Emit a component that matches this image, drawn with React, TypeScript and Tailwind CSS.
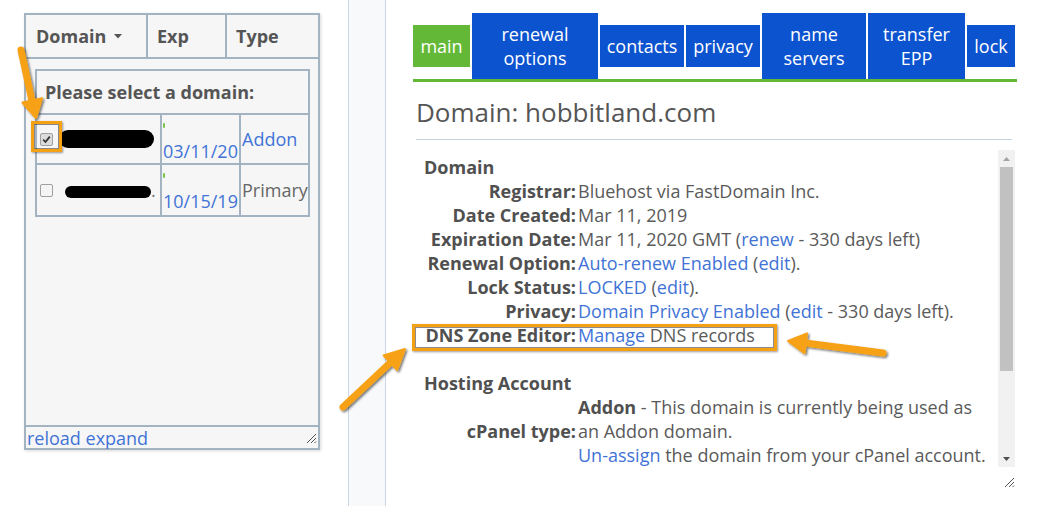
import React from "react";

const link = "text-[#4173d6]";

function Checkbox({ checked }: { checked?: boolean }) {
  return (
    <div
      className={`w-[13px] h-[13px] rounded-[2px] border border-[#a0a0a0] flex items-center justify-center shrink-0 ${
        checked ? "bg-[#dcdcdc]" : "bg-[#f4f4f4]"
      }`}
    >
      {checked && (
        <svg width="9" height="9" viewBox="0 0 9 9">
          <path d="M1.2 4.6 L3.5 7 L7.8 1.6" fill="none" stroke="#333" strokeWidth="1.8" />
        </svg>
      )}
    </div>
  );
}

function Grip() {
  return (
    <svg width="12" height="12" viewBox="0 0 12 12">
      <path d="M11 2 L2 11 M11 6 L6 11 M11 9.5 L9.5 11" stroke="#555" strokeWidth="1" fill="none" />
    </svg>
  );
}

function DomainList() {
  const line = "border-[#a4b3c2]";
  return (
    <div className={`w-[296px] h-[437px] border-2 ${line} bg-[#f6f6f6] flex flex-col shadow-[1px_1px_3px_rgba(0,0,0,0.15)]`}>
      {/* header */}
      <div className={`flex h-[44px] border-b-2 ${line} text-[18px] font-bold text-[#555]`}>
        <div className={`w-[122px] border-r-2 ${line} pl-[10px] flex items-center gap-[8px]`}>
          Domain
          <svg width="8" height="5" viewBox="0 0 8 5">
            <path d="M0 0 H8 L4 4.5 Z" fill="#555" />
          </svg>
        </div>
        <div className={`w-[79px] border-r-2 ${line} pl-[9px] flex items-center`}>Exp</div>
        <div className="flex-1 pl-[9px] flex items-center">Type</div>
      </div>

      {/* body */}
      <div className="flex-1 pl-[9px] pt-[10px]">
        <div className={`w-[275px] border-2 ${line} text-[18px]`}>
          <div className={`h-[44px] border-b-2 ${line} pl-[8px] flex items-center text-[18px] font-bold text-[#555]`}>
            Please select a domain:
          </div>
          {[
            { checked: true, date: "03/11/20", type: "Addon", blob: "w-[95px] h-[18px]", tail: "" },
            { checked: false, date: "10/15/19", type: "Primary", blob: "w-[86px] h-[12px]", tail: "." },
          ].map((r, i) => (
            <div key={i} className={`flex h-[50px] ${i === 0 ? `border-b-2 ${line}` : ""}`}>
              <div className={`w-[125px] border-r-2 ${line} flex items-center pl-[3px] gap-[6px]`}>
                <Checkbox checked={r.checked} />
                <div className="flex items-end">
                  <div className={`${r.blob} bg-black rounded-full blur-[0.6px] ${i === 1 ? "ml-[6px] mt-[3px]" : ""}`} />
                  {r.tail && <span className="text-[#777] leading-4">{r.tail}</span>}
                </div>
              </div>
              <div className={`w-[79px] border-r-2 ${line} pl-[1px] flex flex-col leading-6`}>
                <div className="h-[24px] flex items-start pt-[8px]">
                  <span className="w-[2px] h-[5px] bg-[#7cc44a] rounded-full" />
                </div>
                <span className={`${link} whitespace-nowrap`}>{r.date}</span>
              </div>
              <div className={`flex-1 flex items-center pl-[1px] ${i === 0 ? link : "text-[#666]"}`}>{r.type}</div>
            </div>
          ))}
        </div>
      </div>

      {/* footer */}
      <div className={`h-[23px] border-t-2 ${line} flex items-center justify-between pl-[1px] pr-[1px]`}>
        <span className={`${link} text-[18px] leading-5`}>reload expand</span>
        <Grip />
      </div>
    </div>
  );
}

const tabs = [
  { label: "main", w: "w-[57px]", active: true },
  { label: "renewal\noptions", w: "w-[126px]" },
  { label: "contacts", w: "w-[84px]" },
  { label: "privacy", w: "w-[74px]" },
  { label: "name\nservers", w: "w-[104px]" },
  { label: "transfer\nEPP", w: "w-[97px]" },
  { label: "lock", w: "w-[48px]" },
];

function Row({ label, children }: { label?: string; children?: React.ReactNode }) {
  return (
    <div className="grid grid-cols-[160px_1fr] items-center">
      <div className="text-right font-bold text-[#505050] whitespace-nowrap">{label ? `${label}:` : ""}</div>
      <div className="pl-[2px] whitespace-nowrap">{children}</div>
    </div>
  );
}

function DomainDetails() {
  return (
    <div className="flex-1 pl-[27px] pt-[13px]">
      <div className="w-[604px] h-[69px] flex items-center gap-[2px] border-b-[3px] border-[#62b735]">
        {tabs.map((t) => (
          <div
            key={t.label}
            className={`${t.w} py-[9px] text-center text-white text-[18px] leading-6 whitespace-pre ${
              t.active ? "bg-[#63b937]" : "bg-[#0c53cf]"
            }`}
          >
            {t.label}
          </div>
        ))}
      </div>

      <h1 className="mt-[14px] ml-[3px] w-[596px] pb-[11px] border-b border-[#c3d3e0] text-[26px] leading-8 text-[#555]">
        Domain: hobbitland.com
      </h1>

      <div className="ml-[3px] mt-[10px] w-[599px] h-[317px] flex">
        <div className="flex-1 overflow-hidden pt-[5px] text-[18px] leading-6 text-[#5a5a5a]">
          <div className="pl-[8px] font-bold text-[#505050]">Domain</div>
          <Row label="Registrar">Bluehost via FastDomain Inc.</Row>
          <Row label="Date Created">Mar 11, 2019</Row>
          <Row label="Expiration Date">
            Mar 11, 2020 GMT (<span className={link}>renew</span> - 330 days left)
          </Row>
          <Row label="Renewal Option">
            <span className={link}>Auto-renew Enabled</span> (<span className={link}>edit</span>).
          </Row>
          <Row label="Lock Status">
            <span className={link}>LOCKED</span> (<span className={link}>edit</span>).
          </Row>
          <Row label="Privacy">
            <span className={link}>Domain Privacy Enabled</span> (<span className={link}>edit</span> - 330 days left).
          </Row>
          <Row label="DNS Zone Editor">
            <span className={link}>Manage</span> DNS records
          </Row>
          <div className="h-[24px]" />
          <div className="pl-[8px] font-bold text-[#505050]">Hosting Account</div>
          <Row label="cPanel type">
            <span className="font-bold text-[#505050]">Addon</span> - This domain is currently being used as
            <br />
            an Addon domain.
            <br />
            <span className={link}>Un-assign</span> the domain from your cPanel account.
          </Row>
        </div>

        {/* scrollbar */}
        <div className="w-[17px] bg-[#f1f1f1] flex flex-col items-center">
          <div className="h-[17px] flex items-center justify-center">
            <svg width="7" height="4" viewBox="0 0 7 4">
              <path d="M0 4 L3.5 0 L7 4 Z" fill="#a3a3a3" />
            </svg>
          </div>
          <div className="w-[13px] h-[204px] bg-[#c1c1c1]" />
          <div className="flex-1" />
          <div className="h-[17px] flex items-center justify-center">
            <svg width="7" height="4" viewBox="0 0 7 4">
              <path d="M0 0 L7 0 L3.5 4 Z" fill="#505050" />
            </svg>
          </div>
        </div>
      </div>
      <div className="w-[602px] flex justify-end mt-[9px]">
        <Grip />
      </div>
    </div>
  );
}

function Annotations() {
  const orange = "#f6a114";
  return (
    <>
      <div className="absolute left-[31px] top-[121px] w-[31px] h-[31px] border-[3px] border-[#f6a114] shadow-[inset_0_0_0_1px_rgba(0,0,0,0.45),1px_1px_2px_rgba(0,0,0,0.4)]" />
      <div className="absolute left-[412px] top-[324px] w-[365px] h-[27px] border-[3px] border-[#f6a114] shadow-[inset_0_0_0_1px_rgba(0,0,0,0.45),1px_1px_2px_rgba(0,0,0,0.4)]" />
      <svg className="absolute left-0 top-0 pointer-events-none" width="1044" height="506">
        <defs>
          <filter id="sh" x="-20%" y="-20%" width="140%" height="140%">
            <feDropShadow dx="1.5" dy="1.5" stdDeviation="1" floodColor="#000" floodOpacity="0.55" />
          </filter>
        </defs>
        <g filter="url(#sh)" fill={orange} stroke={orange} strokeLinecap="round" strokeLinejoin="round">
          <line x1="21" y1="50" x2="32" y2="101" strokeWidth="7" />
          <polygon points="22.4,102.5 42,98.3 36,118" strokeWidth="2" />
          <line x1="343" y1="407" x2="391" y2="362" strokeWidth="7" />
          <polygon points="397.2,370 383.6,355.4 405,349" strokeWidth="2" />
          <line x1="883" y1="353" x2="805" y2="343" strokeWidth="7" />
          <polygon points="807,333.4 804.6,353.2 788,341" strokeWidth="2" />
        </g>
      </svg>
    </>
  );
}

export default function App() {
  return (
    <div className="relative w-[1044px] h-[506px] overflow-hidden bg-white flex font-['Open_Sans',sans-serif] text-[#555]">
      <div className="w-[348px] pl-[24px] pt-[13px]">
        <DomainList />
      </div>
      <div className="w-[38px] h-full border-x border-[#c9d7e6] bg-[#f7f9fb]" />
      <DomainDetails />
      <Annotations />
    </div>
  );
}
